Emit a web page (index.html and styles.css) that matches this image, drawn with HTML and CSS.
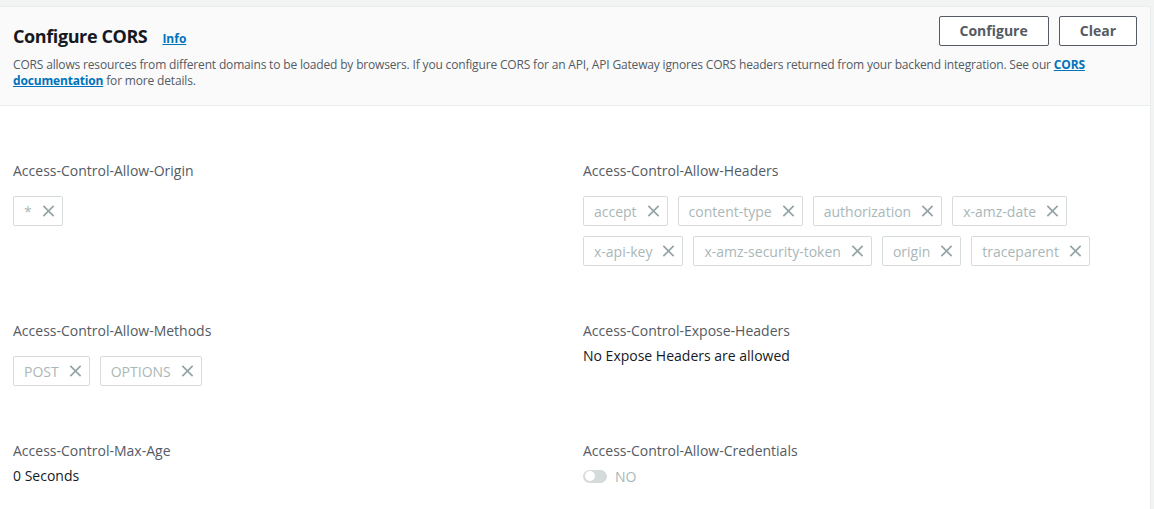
FILE: index.html
```html
<!DOCTYPE html>
<html lang="en">
<head>
<meta charset="utf-8">
<title>Configure CORS</title>
<link rel="stylesheet" href="styles.css">
</head>
<body>
<div class="card">
  <header class="card-header">
    <div class="header-top">
      <h2 class="title"><span class="title-text">Configure CORS</span><a class="info" href="#">Info</a></h2>
      <div class="actions">
        <button class="btn" type="button">Configure</button>
        <button class="btn" type="button">Clear</button>
      </div>
    </div>
    <p class="desc">CORS allows resources from different domains to be loaded by browsers. If you configure CORS for an API, API Gateway ignores CORS headers returned from your backend integration. See our <a class="link" href="#">CORS</a><br><a class="link" href="#">documentation</a> for more details.</p>
  </header>
  <div class="card-body">
    <div class="field">
      <div class="label">Access-Control-Allow-Origin</div>
      <div class="tokens">
        <span class="token">*<svg class="x" viewBox="0 0 14 14"><path d="M1 1L13 13M13 1L1 13"/></svg></span>
      </div>
    </div>
    <div class="field">
      <div class="label">Access-Control-Allow-Headers</div>
      <div class="tokens">
        <span class="token">accept<svg class="x" viewBox="0 0 14 14"><path d="M1 1L13 13M13 1L1 13"/></svg></span>
        <span class="token">content-type<svg class="x" viewBox="0 0 14 14"><path d="M1 1L13 13M13 1L1 13"/></svg></span>
        <span class="token">authorization<svg class="x" viewBox="0 0 14 14"><path d="M1 1L13 13M13 1L1 13"/></svg></span>
        <span class="token">x-amz-date<svg class="x" viewBox="0 0 14 14"><path d="M1 1L13 13M13 1L1 13"/></svg></span>
        <span class="token">x-api-key<svg class="x" viewBox="0 0 14 14"><path d="M1 1L13 13M13 1L1 13"/></svg></span>
        <span class="token">x-amz-security-token<svg class="x" viewBox="0 0 14 14"><path d="M1 1L13 13M13 1L1 13"/></svg></span>
        <span class="token">origin<svg class="x" viewBox="0 0 14 14"><path d="M1 1L13 13M13 1L1 13"/></svg></span>
        <span class="token">traceparent<svg class="x" viewBox="0 0 14 14"><path d="M1 1L13 13M13 1L1 13"/></svg></span>
      </div>
    </div>
    <div class="field">
      <div class="label">Access-Control-Allow-Methods</div>
      <div class="tokens">
        <span class="token">POST<svg class="x" viewBox="0 0 14 14"><path d="M1 1L13 13M13 1L1 13"/></svg></span>
        <span class="token">OPTIONS<svg class="x" viewBox="0 0 14 14"><path d="M1 1L13 13M13 1L1 13"/></svg></span>
      </div>
    </div>
    <div class="field">
      <div class="label">Access-Control-Expose-Headers</div>
      <div class="value">No Expose Headers are allowed</div>
    </div>
    <div class="field">
      <div class="label">Access-Control-Max-Age</div>
      <div class="value">0 Seconds</div>
    </div>
    <div class="field">
      <div class="label">Access-Control-Allow-Credentials</div>
      <div class="toggle-row">
        <span class="toggle"><span class="knob"></span></span>
        <span class="toggle-text">NO</span>
      </div>
    </div>
  </div>
</div>
</body>
</html>
```
FILE: styles.css
```css
* { box-sizing: border-box; }
html, body { margin: 0; padding: 0; }
body {
  background: #f2f3f3;
  font-family: "Open Sans", "Noto Sans", Arial, sans-serif;
  color: #16191f;
  padding: 6px 3px 0 0;
  height: 509px;
  overflow: hidden;
}
.card {
  background: #fff;
  border-top: 1px solid #eaeded;
  border-right: 1px solid #eaeded;
  min-height: 503px;
}
.card-header {
  background: #fafafa;
  border-bottom: 1px solid #eaeded;
  padding: 9px 13px 16px 13px;
}
.header-top {
  display: flex;
  justify-content: space-between;
  align-items: flex-start;
  height: 31px;
}
.title {
  display: flex;
  align-items: baseline;
  margin: 9px 0 0 0;
  font-size: 18px;
  line-height: 22px;
  font-weight: 700;
  letter-spacing: -0.4px;
  color: #16191f;
}
.info {
  margin-left: 15px;
  font-size: 12px;
  line-height: 16px;
  font-weight: 700;
  letter-spacing: 0;
  color: #0073bb;
  text-decoration: underline;
}
.actions {
  display: flex;
  gap: 10px;
}
.btn {
  height: 30px;
  padding: 0 20px;
  border: 1px solid #545b64;
  border-radius: 2px;
  background: #fff;
  color: #545b64;
  font-family: inherit;
  font-size: 14px;
  font-weight: 700;
  line-height: 28px;
}
.desc {
  margin: 10px 0 0 0;
  font-size: 12px;
  line-height: 16px;
  letter-spacing: -0.17px;
  color: #545b64;
}
.link {
  color: #0073bb;
  font-weight: 700;
  text-decoration: underline;
}
.card-body {
  display: grid;
  grid-template-columns: 1fr 1fr;
  column-gap: 16px;
  row-gap: 55px;
  padding: 55px 13px 20px 13px;
}
.label {
  font-size: 14px;
  line-height: 20px;
  color: #545b64;
  margin-bottom: 5px;
}
.value {
  font-size: 14px;
  line-height: 20px;
  color: #16191f;
}
.tokens {
  display: flex;
  flex-wrap: wrap;
  gap: 10px;
  padding-top: 10px;
}
.token {
  display: inline-flex;
  align-items: center;
  height: 30px;
  padding: 0 6px 0 10px;
  border: 1px solid #d5dbdb;
  border-radius: 2px;
  background: #fff;
  font-size: 14px;
  color: #aab7b8;
}
.x {
  width: 13px;
  height: 12px;
  margin-left: 10px;
  margin-right: 1px;
  fill: none;
  stroke: #95a5a6;
  stroke-width: 2;
}
.toggle-row {
  display: flex;
  align-items: center;
  height: 20px;
  gap: 8px;
}
.toggle {
  display: inline-flex;
  align-items: center;
  width: 24px;
  height: 13px;
  border-radius: 7px;
  background: #d5dbdb;
  padding-left: 2px;
}
.knob {
  width: 10px;
  height: 10px;
  border-radius: 50%;
  background: #fff;
}
.toggle-text {
  font-size: 14px;
  color: #aab7b8;
}
```
